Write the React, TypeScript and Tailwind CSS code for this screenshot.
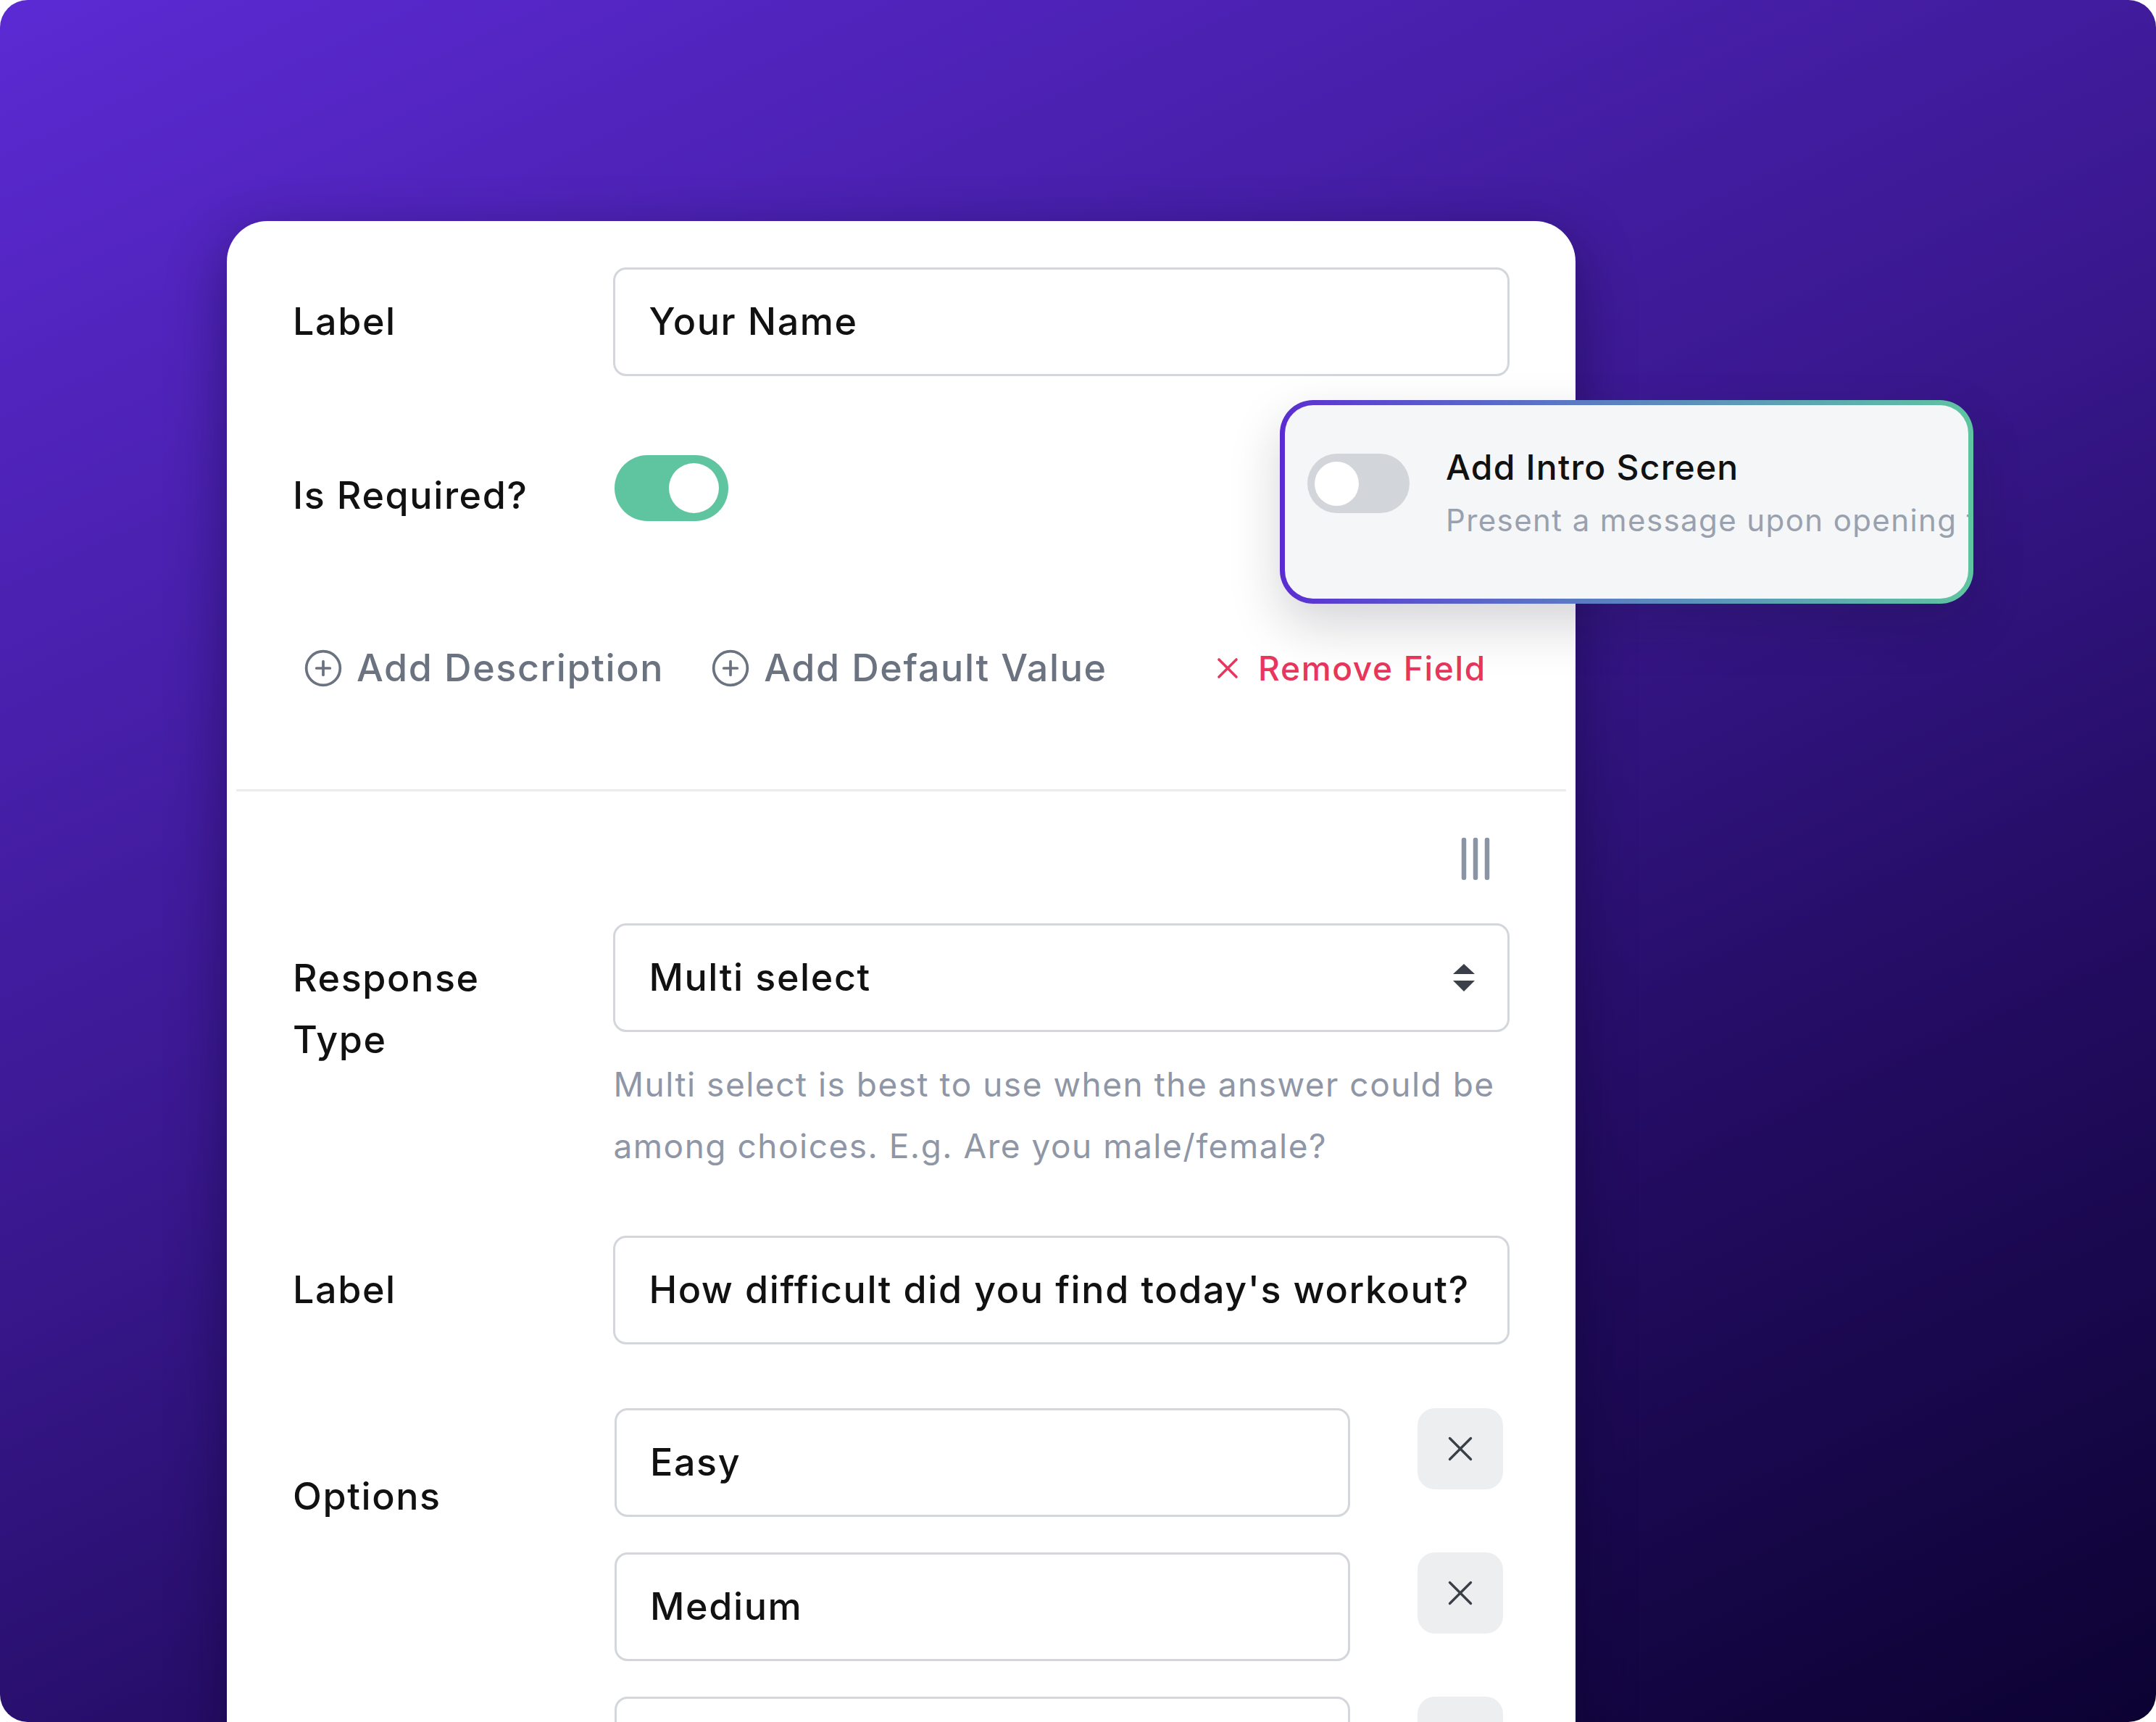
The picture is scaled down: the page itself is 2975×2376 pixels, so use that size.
import React from 'react';
import { CirclePlus, X } from 'lucide-react';

// small drawings that lucide has no exact match for
const DragHandle = () => (
  <svg width="40" height="60" viewBox="0 0 40 60" fill="none">
    <line x1="4" y1="4" x2="4" y2="56" stroke="#8b94a4" strokeWidth="6.5" strokeLinecap="round" />
    <line x1="20" y1="4" x2="20" y2="56" stroke="#8b94a4" strokeWidth="6.5" strokeLinecap="round" />
    <line x1="36" y1="4" x2="36" y2="56" stroke="#8b94a4" strokeWidth="6.5" strokeLinecap="round" />
  </svg>
);

const SelectArrows = () => (
  <svg width="32" height="38" viewBox="0 0 32 38" fill="#3a3f4a">
    <path d="M16 0 L31 14 L1 14 Z" />
    <path d="M1 23 L31 23 L16 38 Z" />
  </svg>
);

const TextBox = ({ value, className = '' }: { value: string; className?: string }) => (
  <div
    className={`h-[150px] flex items-center border-[3px] border-[#d3d6db] rounded-[18px] bg-white pl-[46px] text-[52px] tracking-[1.6px] font-medium text-[#111111] ${className}`}
  >
    {value}
  </div>
);

const OptionRow = ({ value }: { value: string }) => (
  <div className="flex items-start">
    <TextBox value={value} className="w-[1015px]" />
    <button className="ml-[93px] w-[118px] h-[112px] rounded-[24px] bg-[#eceef0] flex items-center justify-center text-[#3b3f47]">
      <X size={58} strokeWidth={1.4} />
    </button>
  </div>
);

const App: React.FC = () => {
  return (
    <div className="w-[2975px] h-[2376px] bg-white font-['Inter','Noto_Sans',sans-serif]">
      <div className="relative w-full h-full overflow-hidden rounded-[38px] bg-[linear-gradient(155deg,#5c2ad3_0%,#3a1890_45%,#230c62_70%,#0c0232_100%)] pt-[305px] pl-[313px]">
        {/* Form card */}
        <div className="w-[1861px] h-[2300px] rounded-[56px] bg-white shadow-[0_25px_80px_rgba(10,0,40,0.45)] pt-[64px]">
          <div className="px-[91px]">
            <div className="flex items-center">
              <div className="w-[444px] text-[52px] tracking-[1.6px] font-medium text-[#111111]">Label</div>
              <TextBox value="Your Name" className="w-[1241px]" />
            </div>

            <div className="flex items-start mt-[109px]">
              <div className="w-[444px] mt-[13px] leading-[85px] text-[52px] tracking-[1.6px] font-medium text-[#111111]">Is Required?</div>
              <div className="w-[157px] h-[91px] rounded-full bg-[#5fc4a0] flex items-center justify-end pr-[13px]">
                <div className="w-[69px] h-[69px] rounded-full bg-white" />
              </div>
            </div>

            <div className="flex items-center h-[66px] mt-[163px] pl-[14px] pr-[32px] text-[52px] tracking-[1.6px] font-medium text-[#6b7280]">
              <div className="flex items-center gap-[18px]">
                <CirclePlus size={56} strokeWidth={1.6} />
                <span>Add Description</span>
              </div>
              <div className="flex items-center gap-[18px] ml-[64px]">
                <CirclePlus size={56} strokeWidth={1.6} />
                <span>Add Default Value</span>
              </div>
              <div className="flex items-center gap-[18px] ml-auto text-[46px] tracking-[1.7px] text-[#e8365d]">
                <X size={48} strokeWidth={1.8} />
                <span>Remove Field</span>
              </div>
            </div>
          </div>

          <div className="mx-[13px] mt-[134px] h-[3px] bg-[#ececec]" />

          <div className="flex justify-end pr-[118px] mt-[63px]">
            <DragHandle />
          </div>

          <div className="px-[91px] mt-[59px]">
            <div className="flex items-start">
              <div className="w-[444px] mt-[33px] leading-[85px] text-[52px] tracking-[1.6px] font-medium text-[#111111]">
                Response
                <br />
                Type
              </div>
              <div className="w-[1241px]">
                <div className="h-[150px] flex items-center justify-between border-[3px] border-[#d3d6db] rounded-[18px] pl-[46px] pr-[44px] text-[52px] tracking-[1.6px] font-medium text-[#111111]">
                  <span>Multi select</span>
                  <SelectArrows />
                </div>
                <p className="mt-[30px] leading-[85px] text-[46px] tracking-[1.5px] text-[#8f97a7]">
                  Multi select is best to use when the answer could be among choices. E.g. Are you male/female?
                </p>
              </div>
            </div>

            <div className="flex items-center mt-[81px]">
              <div className="w-[444px] text-[52px] tracking-[1.6px] font-medium text-[#111111]">Label</div>
              <TextBox value="How difficult did you find today's workout?" className="w-[1241px]" />
            </div>

            <div className="flex items-start mt-[88px]">
              <div className="w-[444px] mt-[79px] leading-[85px] text-[52px] tracking-[1.6px] font-medium text-[#111111]">Options</div>
              <div className="flex flex-col gap-[49px]">
                <OptionRow value="Easy" />
                <OptionRow value="Medium" />
                <OptionRow value="" />
              </div>
            </div>
          </div>
        </div>

        {/* Floating intro-screen toggle */}
        <div className="absolute left-[1766px] top-[552px] w-[957px] h-[281px] rounded-[46px] p-[7px] bg-linear-to-r from-[#5a2bd2] to-[#5fc4a0] shadow-[0_30px_70px_rgba(20,20,40,0.18)]">
          <div className="w-full h-full rounded-[39px] bg-[#f5f6f7] overflow-hidden flex items-start pl-[31px] pt-[67px]">
            <div className="shrink-0 w-[141px] h-[82px] rounded-full bg-[#d2d5da] flex items-center pl-[10px]">
              <div className="w-[61px] h-[61px] rounded-full bg-white" />
            </div>
            <div className="ml-[50px] -mt-[13px] whitespace-nowrap">
              <div className="text-[48px] leading-[64px] tracking-[1.2px] font-medium text-[#111111]">Add Intro Screen</div>
              <div className="text-[42px] leading-[64px] tracking-[1.4px] text-[#9aa1ae] mt-[9px]">
                Present a message upon opening the form
              </div>
            </div>
          </div>
        </div>
      </div>
    </div>
  );
};

export default App;
